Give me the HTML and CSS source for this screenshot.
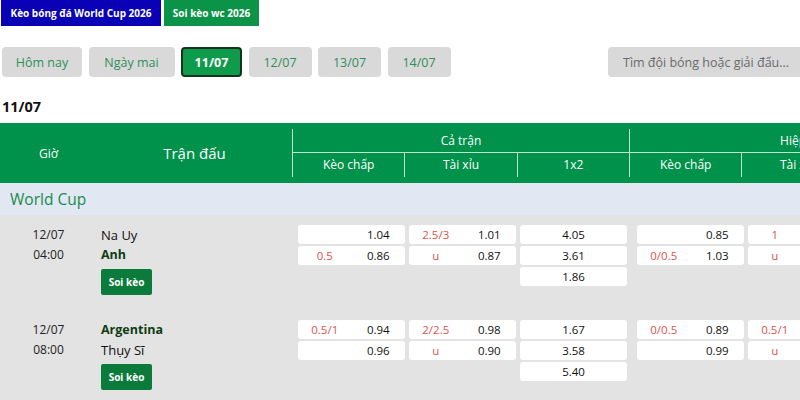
FILE: index.html
```html
<!DOCTYPE html>
<html lang="vi">
<head>
    <meta charset="UTF-8">
    <meta name="viewport" content="width=device-width, initial-scale=1.0">
    <title>Kèo bóng đá World Cup 2026</title>
    <link rel="stylesheet" href="styles.css">
</head>
<body>

    <div class="page">
        <div class="top-links">
            <a class="top-link blue" href="#">Kèo bóng đá World Cup 2026</a>
            <a class="top-link green" href="#">Soi kèo wc 2026</a>
        </div>

        <div class="date-bar">
            <button class="date-tab w-today">Hôm nay</button>
            <button class="date-tab w-tomorrow">Ngày mai</button>
            <button class="date-tab w-day active">11/07</button>
            <button class="date-tab w-day">12/07</button>
            <button class="date-tab w-day">13/07</button>
            <button class="date-tab w-day">14/07</button>
            <input type="text" class="search" placeholder="Tìm đội bóng hoặc giải đấu...">
        </div>

        <h2 class="day-title">11/07</h2>

        <div class="odds-table">
            <div class="thead">
                <div class="th-time">Giờ</div>
                <div class="th-match">Trận đấu</div>
                <div class="th-groups">
                    <div class="th-group">
                        <div class="th-title">Cả trận</div>
                        <div class="th-subs">
                            <div class="th-sub">Kèo chấp</div>
                            <div class="th-sub">Tài xỉu</div>
                            <div class="th-sub">1x2</div>
                        </div>
                    </div>
                    <div class="th-group">
                        <div class="th-title">Hiệp 1</div>
                        <div class="th-subs">
                            <div class="th-sub">Kèo chấp</div>
                            <div class="th-sub">Tài xỉu</div>
                            <div class="th-sub">1x2</div>
                        </div>
                    </div>
                </div>
            </div>

            <div class="league">World Cup</div>

            <!-- Na Uy - Anh -->
            <div class="match">
                <div class="m-time">
                    <div>12/07</div>
                    <div>04:00</div>
                </div>
                <div class="m-teams">
                    <div class="team">Na Uy</div>
                    <div class="team fav">Anh</div>
                    <a class="btn-soi" href="#">Soi kèo</a>
                </div>
                <div class="m-odds">
                    <div class="odds-group">
                        <div class="odds-col">
                            <div class="odd"><span class="line"></span><span class="val">1.04</span></div>
                            <div class="odd"><span class="line">0.5</span><span class="val">0.86</span></div>
                        </div>
                        <div class="odds-col">
                            <div class="odd"><span class="line">2.5/3</span><span class="val">1.01</span></div>
                            <div class="odd"><span class="line">u</span><span class="val">0.87</span></div>
                        </div>
                        <div class="odds-col">
                            <div class="odd single">4.05</div>
                            <div class="odd single">3.61</div>
                            <div class="odd single">1.86</div>
                        </div>
                    </div>
                    <div class="odds-group">
                        <div class="odds-col">
                            <div class="odd"><span class="line"></span><span class="val">0.85</span></div>
                            <div class="odd"><span class="line">0/0.5</span><span class="val">1.03</span></div>
                        </div>
                        <div class="odds-col">
                            <div class="odd"><span class="line">1</span><span class="val">0.95</span></div>
                            <div class="odd"><span class="line">u</span><span class="val">0.91</span></div>
                        </div>
                    </div>
                </div>
            </div>

            <!-- Argentina - Thụy Sĩ -->
            <div class="match">
                <div class="m-time">
                    <div>12/07</div>
                    <div>08:00</div>
                </div>
                <div class="m-teams">
                    <div class="team fav">Argentina</div>
                    <div class="team">Thụy Sĩ</div>
                    <a class="btn-soi" href="#">Soi kèo</a>
                </div>
                <div class="m-odds">
                    <div class="odds-group">
                        <div class="odds-col">
                            <div class="odd"><span class="line">0.5/1</span><span class="val">0.94</span></div>
                            <div class="odd"><span class="line"></span><span class="val">0.96</span></div>
                        </div>
                        <div class="odds-col">
                            <div class="odd"><span class="line">2/2.5</span><span class="val">0.98</span></div>
                            <div class="odd"><span class="line">u</span><span class="val">0.90</span></div>
                        </div>
                        <div class="odds-col">
                            <div class="odd single">1.67</div>
                            <div class="odd single">3.58</div>
                            <div class="odd single">5.40</div>
                        </div>
                    </div>
                    <div class="odds-group">
                        <div class="odds-col">
                            <div class="odd"><span class="line">0/0.5</span><span class="val">0.89</span></div>
                            <div class="odd"><span class="line"></span><span class="val">0.99</span></div>
                        </div>
                        <div class="odds-col">
                            <div class="odd"><span class="line">0.5/1</span><span class="val">0.92</span></div>
                            <div class="odd"><span class="line">u</span><span class="val">0.94</span></div>
                        </div>
                    </div>
                </div>
            </div>
        </div>
    </div>

</body>
</html>
```

FILE: styles.css
```css
html, body {
    overflow: hidden;
}

body {
    font-family: "Open Sans", "Noto Sans", Arial, sans-serif;
    background: #fff;
    color: #111;
    margin: 0;
    padding: 0;
}

.page {
    width: 1100px;
}

/* top links */
.top-links {
    display: flex;
    gap: 3px;
    padding-left: 1px;
}

.top-link {
    display: flex;
    align-items: center;
    justify-content: center;
    height: 26px;
    color: #fff;
    font-size: 10px;
    font-weight: 700;
    text-decoration: none;
    white-space: nowrap;
}

.top-link.blue {
    width: 160px;
    background-color: #0a00b6;
}

.top-link.green {
    width: 95px;
    background-color: #0b9447;
}

/* date tabs + search */
.date-bar {
    display: flex;
    align-items: center;
    gap: 6.5px;
    width: 816px;
    margin-top: 21px;
    padding-left: 2px;
}

.date-tab {
    height: 30px;
    padding: 0;
    background-color: #d9d9d9;
    color: #2f8f57;
    border: none;
    border-radius: 4px;
    font-family: inherit;
    font-size: 12.5px;
    cursor: pointer;
}

.w-today {
    width: 80px;
}

.w-tomorrow {
    width: 86px;
}

.w-day {
    width: 63px;
}

.date-tab.active {
    width: 61px;
    background-color: #0e9b4b;
    color: #fff;
    font-weight: 700;
    border: 2px solid #17331d;
}

.search {
    margin-left: auto;
    width: 210px;
    height: 30px;
    box-sizing: border-box;
    padding: 0 15px;
    background-color: #d9d9d9;
    border: none;
    border-radius: 4px;
    font-family: inherit;
    font-size: 12.5px;
}

.search::placeholder {
    color: #6a6a6a;
}

.day-title {
    margin: 20px 0 6px 2px;
    font-size: 14.5px;
    line-height: 20px;
    font-weight: 700;
    color: #111;
}

/* table header */
.thead {
    display: flex;
    height: 60px;
    background-color: #00914a;
    color: #fff;
}

.th-time, .th-match {
    display: flex;
    align-items: center;
    justify-content: center;
}

.th-time {
    width: 97px;
    font-size: 12px;
}

.th-match {
    width: 195px;
    font-size: 15px;
}

.th-groups {
    display: flex;
    padding: 6px 0;
}

.th-group {
    width: 337px;
    border-left: 1px solid rgba(255, 255, 255, 0.75);
    box-sizing: border-box;
}

.th-title {
    height: 23px;
    line-height: 23px;
    text-align: center;
    font-size: 12px;
    border-bottom: 1px solid rgba(255, 255, 255, 0.75);
}

.th-subs {
    display: flex;
    height: 24px;
}

.th-sub {
    flex: 1;
    line-height: 24px;
    text-align: center;
    font-size: 12px;
}

.th-sub + .th-sub {
    border-left: 1px solid rgba(255, 255, 255, 0.75);
}

/* league row */
.league {
    height: 32px;
    line-height: 32px;
    padding-left: 10px;
    background-color: #e1e7f3;
    color: #1a8b4b;
    font-size: 15.5px;
    font-weight: 500;
}

/* match rows */
.match {
    display: flex;
    padding: 9.5px 0 15.5px;
    background-color: #e3e3e3;
}

.m-time {
    width: 97px;
    text-align: center;
    font-size: 12px;
    line-height: 20px;
    color: #222;
}

.m-teams {
    width: 191px;
    padding-left: 4px;
    font-size: 13px;
    line-height: 20px;
}

.team.fav {
    font-weight: 700;
    color: #0f3d12;
    font-size: 12.5px;
}

.btn-soi {
    display: inline-flex;
    align-items: center;
    justify-content: center;
    width: 51px;
    height: 26px;
    margin-top: 4px;
    background-color: #0b7b3c;
    color: #fff;
    border-radius: 2px;
    font-size: 10px;
    font-weight: 700;
    text-decoration: none;
}

.m-odds {
    display: flex;
    gap: 10px;
    padding-left: 6px;
}

.odds-group {
    display: flex;
    gap: 4px;
}

.odds-col {
    display: flex;
    flex-direction: column;
    gap: 2px;
    width: 107px;
}

.odd {
    display: flex;
    height: 19px;
    line-height: 19px;
    background-color: #fff;
    border-radius: 3px;
    font-size: 11.5px;
}

.odd span {
    width: 50%;
    text-align: center;
}

.odd .line {
    color: #e0524a;
}

.odd .val {
    color: #111;
}

.odd.single {
    justify-content: center;
}
```
